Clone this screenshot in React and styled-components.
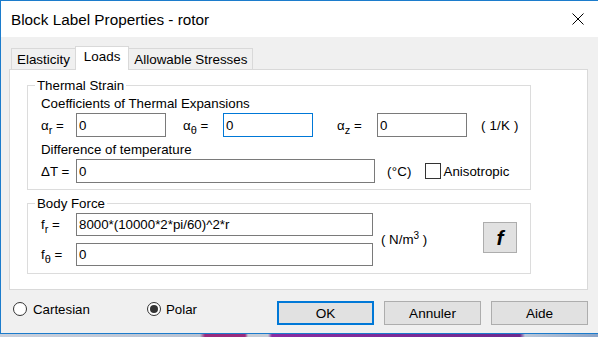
import React from "react";
import styled, { createGlobalStyle } from "styled-components";

const GlobalStyle = createGlobalStyle`
  html, body {
    margin: 0;
    padding: 0;
    background: #f0f0f0;
  }
  body {
    font-family: "Liberation Sans", Arial, sans-serif;
    font-size: 13.3px;
    color: #000;
  }
`;

const Window = styled.div`
  width: 598px;
  height: 334px;
  box-sizing: border-box;
  border: 1px solid #1c7ccc;
  border-right: none;
  background: #f0f0f0;
  display: flex;
  flex-direction: column;
`;

const TitleBar = styled.div`
  height: 36px;
  flex-shrink: 0;
  background: #ffffff;
  display: flex;
  align-items: center;
  justify-content: space-between;
`;

const Title = styled.div`
  padding: 2px 0 0 10px;
  font-size: 15.3px;
  color: #000;
`;

const CloseButton = styled.div`
  width: 40px;
  height: 36px;
  display: flex;
  align-items: center;
  justify-content: center;
`;

const Body = styled.div`
  flex: 1;
  display: flex;
  flex-direction: column;
  padding: 9px 10px 0 8px;
`;

const TabRow = styled.div`
  display: flex;
  align-items: flex-end;
  height: 23px;
  padding-left: 2px;
`;

const Tab = styled.div`
  position: relative;
  box-sizing: border-box;
  height: ${(p) => (p.$active ? "24px" : "21px")};
  margin-bottom: ${(p) => (p.$active ? "-1px" : "0")};
  padding: ${(p) => (p.$active ? "2px 8px 0" : "3px 5px 0")};
  border: 1px solid #d9d9d9;
  border-bottom: none;
  background: ${(p) => (p.$active ? "#ffffff" : "#f0f0f0")};
  z-index: ${(p) => (p.$active ? 1 : 0)};
  line-height: 15px;
  font-size: 13.4px;
  white-space: nowrap;

  & + & {
    margin-left: -1px;
  }
`;

const Panel = styled.div`
  box-sizing: border-box;
  height: 221px;
  border: 1px solid #d9d9d9;
  background: #ffffff;
  padding: 0 0 0 17px;
`;

const Group = styled.fieldset`
  box-sizing: border-box;
  width: 504px;
  margin: ${(p) => p.$top}px 0 0 0;
  padding: 0 0 ${(p) => p.$bottom}px 13px;
  border: 1px solid #dcdcdc;
  min-width: 0;
`;

const Legend = styled.legend`
  margin-left: -6px;
  padding: 0 2px;
  line-height: 15px;
`;

const Caption = styled.div`
  line-height: 15px;
  margin-top: ${(p) => p.$top}px;
`;

const Row = styled.div`
  display: flex;
  align-items: center;
  height: ${(p) => p.$h || 24}px;
  margin-top: ${(p) => p.$top}px;
`;

const SymLabel = styled.span`
  width: ${(p) => p.$w}px;
  margin-left: ${(p) => p.$ml || 0}px;
  flex-shrink: 0;
  white-space: nowrap;
  line-height: 15px;
`;

const Sub = styled.sub`
  font-size: 11px;
  vertical-align: -4px;
  line-height: 0;
`;

const Sup = styled.sup`
  font-size: 10px;
  vertical-align: 5px;
  line-height: 0;
`;

const Field = styled.input`
  box-sizing: border-box;
  width: ${(p) => p.$w}px;
  height: 100%;
  margin: 0;
  padding: 0 2px;
  border: 1px solid ${(p) => (p.$focused ? "#0078d7" : "#7a7a7a")};
  outline: none;
  background: #ffffff;
  font-family: "Liberation Sans", Arial, sans-serif;
  font-size: 13.3px;
  color: #000;
`;

const Unit = styled.span`
  margin-left: ${(p) => p.$ml}px;
  white-space: nowrap;
  letter-spacing: 0.2px;
`;

const CheckBox = styled.span`
  box-sizing: border-box;
  width: 16px;
  height: 16px;
  margin-left: 13px;
  border: 1px solid #333333;
  background: #ffffff;
`;

const CheckText = styled.span`
  margin-left: 3px;
`;

const ForceBody = styled.div`
  display: flex;
  align-items: flex-start;
`;

const ForceRows = styled.div`
  display: flex;
  flex-direction: column;
`;

const ForceUnit = styled.span`
  align-self: center;
  margin: 1px 0 0 8px;
  white-space: nowrap;
`;

const FuncButton = styled.div`
  box-sizing: border-box;
  width: 34px;
  height: 31px;
  margin: 11px 13px 0 auto;
  border: 1px solid #adadad;
  background: #e1e1e1;
  display: flex;
  align-items: center;
  justify-content: center;
  font-family: "Liberation Sans", Arial, sans-serif;
  font-weight: bold;
  font-style: italic;
  font-size: 21px;
`;

const BottomBar = styled.div`
  flex: 1;
  display: flex;
  align-items: flex-start;
  margin: 0 -10px 0 -8px;
  padding: 0 10px 0 12px;
`;

const RadioOption = styled.div`
  display: flex;
  align-items: center;
  height: 16px;
  margin-top: 11px;
  width: ${(p) => p.$w || "auto"};
`;

const RadioCircle = styled.span`
  box-sizing: border-box;
  width: 14px;
  height: 14px;
  border-radius: 50%;
  border: 1px solid #333333;
  background: #ffffff;
  display: flex;
  align-items: center;
  justify-content: center;
  margin-right: ${(p) => p.$gap}px;

  &::after {
    content: "";
    display: ${(p) => (p.$checked ? "block" : "none")};
    width: 8px;
    height: 8px;
    border-radius: 50%;
    background: #333333;
  }
`;

const ButtonRow = styled.div`
  display: flex;
  gap: 10px;
  margin: 11px 0 0 auto;
`;

const Button = styled.div`
  box-sizing: border-box;
  width: 97px;
  height: 24px;
  border: ${(p) => (p.$default ? "2px solid #0078d7" : "1px solid #adadad")};
  background: #e1e1e1;
  display: flex;
  align-items: center;
  justify-content: center;
  font-size: 13.6px;
`;

const TaskStrip = styled.div`
  height: 3px;
  background: linear-gradient(
    90deg,
    #c9d0dc 0px,
    #b8c2d2 200px,
    #9a2c7e 205px,
    #9a2c7e 245px,
    #c6ccd6 248px,
    #c6ccd6 268px,
    #8a2ca2 272px,
    #6e2a8e 520px,
    #b9c6d8 525px,
    #8aa4c8 598px
  );
`;

function CloseIcon() {
  return (
    <svg width="12" height="12" viewBox="0 0 12 12">
      <path d="M0.5 0.5 L11.5 11.5 M11.5 0.5 L0.5 11.5" stroke="#000" strokeWidth="1" fill="none" />
    </svg>
  );
}

export default function App() {
  return (
    <>
      <GlobalStyle />
      <Window>
        <TitleBar>
          <Title>Block Label Properties - rotor</Title>
          <CloseButton>
            <CloseIcon />
          </CloseButton>
        </TitleBar>
        <Body>
          <TabRow>
            <Tab>Elasticity</Tab>
            <Tab $active>Loads</Tab>
            <Tab>Allowable Stresses</Tab>
          </TabRow>
          <Panel>
            <Group $top={8} $bottom={6}>
              <Legend>Thermal Strain</Legend>
              <Caption $top={3}>Coefficients of Thermal Expansions</Caption>
              <Row $top={2}>
                <SymLabel $w={35}>
                  α<Sub>r</Sub> =
                </SymLabel>
                <Field $w={90} defaultValue="0" readOnly />
                <SymLabel $w={40} $ml={17}>
                  α<Sub>θ</Sub> =
                </SymLabel>
                <Field $w={90} $focused defaultValue="0" readOnly />
                <SymLabel $w={40} $ml={24}>
                  α<Sub>z</Sub> =
                </SymLabel>
                <Field $w={90} defaultValue="0" readOnly />
                <Unit $ml={14}>( 1/K )</Unit>
              </Row>
              <Caption $top={5}>Difference of temperature</Caption>
              <Row $top={2}>
                <SymLabel $w={35}>ΔT =</SymLabel>
                <Field $w={299} defaultValue="0" readOnly />
                <Unit $ml={12}>(°C)</Unit>
                <CheckBox />
                <CheckText>Anisotropic</CheckText>
              </Row>
            </Group>
            <Group $top={6} $bottom={7}>
              <Legend>Body Force</Legend>
              <ForceBody>
                <ForceRows>
                  <Row $top={2} $h={23}>
                    <SymLabel $w={35}>
                      f<Sub>r</Sub> =
                    </SymLabel>
                    <Field $w={297} defaultValue="8000*(10000*2*pi/60)^2*r" readOnly />
                  </Row>
                  <Row $top={7} $h={23}>
                    <SymLabel $w={35}>
                      f<Sub>θ</Sub> =
                    </SymLabel>
                    <Field $w={297} defaultValue="0" readOnly />
                  </Row>
                </ForceRows>
                <ForceUnit>
                  ( N/m<Sup>3</Sup> )
                </ForceUnit>
                <FuncButton>f</FuncButton>
              </ForceBody>
            </Group>
          </Panel>
          <BottomBar>
            <RadioOption $w="134px">
              <RadioCircle $gap={6} />
              Cartesian
            </RadioOption>
            <RadioOption>
              <RadioCircle $gap={5} $checked />
              Polar
            </RadioOption>
            <ButtonRow>
              <Button $default>OK</Button>
              <Button>Annuler</Button>
              <Button>Aide</Button>
            </ButtonRow>
          </BottomBar>
        </Body>
      </Window>
      <TaskStrip />
    </>
  );
}
